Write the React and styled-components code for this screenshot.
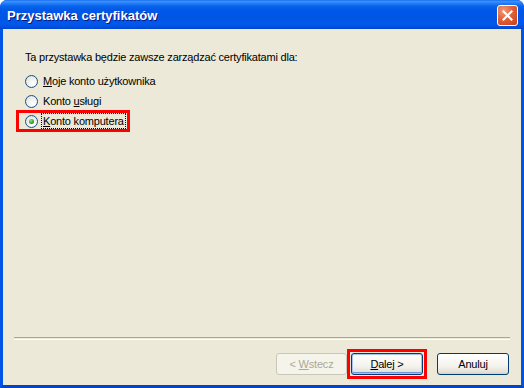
import React from "react";
import styled, { createGlobalStyle, css } from "styled-components";

const Global = createGlobalStyle`
  html, body { margin: 0; padding: 0; background: #ffffff; }
  body { font-family: "Liberation Sans", Arial, sans-serif; font-size: 11px; }
`;

const Window = styled.div`
  width: 524px;
  height: 388px;
  display: flex;
  flex-direction: column;
  box-sizing: border-box;
  overflow: hidden;
  border-radius: 7px 7px 0 0;
  background: #0054e3;
`;

const TitleBar = styled.div`
  height: 29px;
  flex: none;
  display: flex;
  align-items: center;
  justify-content: space-between;
  padding: 0 6px 0 7px;
  box-sizing: border-box;
  background: linear-gradient(
    to bottom,
    #0a5fe8 0px,
    #3d95ff 1px,
    #2a80f8 3px,
    #0765ea 6px,
    #0058e8 10px,
    #0055e5 18px,
    #0058ec 24px,
    #0250de 27px,
    #0044cc 29px
  );
`;

const Title = styled.span`
  color: #ffffff;
  font-family: "Liberation Sans", Arial, sans-serif;
  font-weight: bold;
  font-size: 13px;
  text-shadow: 1px 1px 0 #0a1883;
  margin-top: 1px;
`;

const CloseButton = styled.div`
  width: 21px;
  height: 21px;
  box-sizing: border-box;
  border: 1px solid #ffffff;
  border-radius: 3px;
  background: radial-gradient(circle at 30% 25%, #f09a7d 0%, #e0613a 45%, #c8401b 100%);
  display: flex;
  align-items: center;
  justify-content: center;
  margin-top: 2px;
`;

const Frame = styled.div`
  flex: 1;
  display: flex;
  flex-direction: column;
  border-left: 3px solid #0055e5;
  border-right: 3px solid #0055e5;
  border-bottom: 3px solid #0044cc;
`;

const Body = styled.div`
  flex: 1;
  display: flex;
  flex-direction: column;
  background: #ece9d8;
  color: #000000;
  letter-spacing: -0.2px;
`;

const Content = styled.div`
  flex: 1;
  padding: 22px 22px 0 22px;
  display: flex;
  flex-direction: column;
  align-items: flex-start;
`;

const Intro = styled.div`
  height: 13px;
  line-height: 13px;
  margin-bottom: 7px;
`;

const Row = styled.label`
  position: relative;
  display: inline-flex;
  align-items: center;
  height: 20px;
  gap: 3px;
  ${(p) =>
    p.$highlighted &&
    css`
      &::after {
        content: "";
        position: absolute;
        left: -9px;
        right: -4px;
        top: -1px;
        bottom: -1px;
        border: 3px solid #ff0000;
      }
    `}
`;

const Radio = styled.span`
  width: 13px;
  height: 13px;
  box-sizing: border-box;
  border-radius: 50%;
  border: 1px solid #1c5180;
  background: radial-gradient(circle at 65% 70%, #ffffff 0%, #f3f3ef 40%, #dcdad0 100%);
  display: flex;
  align-items: center;
  justify-content: center;
  flex: none;
  &::before {
    content: "";
    width: 5px;
    height: 5px;
    border-radius: 50%;
    background: radial-gradient(circle at 40% 35%, #8fe28f 0%, #21a121 60%, #17801a 100%);
    display: ${(p) => (p.$checked ? "block" : "none")};
  }
`;

const LabelText = styled.span`
  line-height: 14px;
  padding: 0 1px;
  border: 1px dotted ${(p) => (p.$focused ? "#000000" : "transparent")};
`;

const Separator = styled.div`
  margin: 0 11px;
  height: 1px;
  border-top: 1px solid #aca899;
  border-bottom: 1px solid #ffffff;
`;

const Footer = styled.div`
  display: flex;
  justify-content: flex-end;
  align-items: center;
  padding: 13px 12px 10px 12px;
`;

const Highlight = styled.div`
  border: 3px solid #ff0000;
  padding: 1px;
  margin: -4px -3px -4px 0;
  display: flex;
`;

const Button = styled.div`
  width: ${(p) => p.$w || 72}px;
  height: 22px;
  box-sizing: border-box;
  border-radius: 3px;
  display: flex;
  align-items: center;
  justify-content: center;
  font-size: 11px;
  margin-left: ${(p) => p.$gap || 0}px;
  border: 1px solid #003c74;
  background: linear-gradient(to bottom, #ffffff 0%, #f4f3ee 60%, #e3e1d6 90%, #d6d0c5 100%);
  color: #000000;
  white-space: pre;
  ${(p) =>
    p.$disabled &&
    css`
      border-color: #c9c7ba;
      background: #f5f4ea;
      color: #aca899;
    `}
  ${(p) =>
    p.$default &&
    css`
      box-shadow: inset 0 0 0 1px #a8c2f0, inset 0 -1px 0 1px #6f92df;
    `}
`;

const ButtonLabel = styled.span`
  white-space: pre;
`;

const U = styled.span`
  text-decoration: underline;
`;

export default function App() {
  return (
    <>
      <Global />
      <Window>
        <TitleBar>
          <Title>Przystawka certyfikatów</Title>
          <CloseButton>
            <svg width="11" height="11" viewBox="0 0 11 11">
              <path d="M1.5 1.5 L9.5 9.5 M9.5 1.5 L1.5 9.5" stroke="#ffffff" strokeWidth="2.2" strokeLinecap="square" />
            </svg>
          </CloseButton>
        </TitleBar>
        <Frame>
          <Body>
            <Content>
              <Intro>Ta przystawka będzie zawsze zarządzać certyfikatami dla:</Intro>
              <Row>
                <Radio />
                <LabelText>
                  <U>M</U>oje konto użytkownika
                </LabelText>
              </Row>
              <Row>
                <Radio />
                <LabelText>
                  Konto <U>u</U>sługi
                </LabelText>
              </Row>
              <Row $highlighted>
                <Radio $checked />
                <LabelText $focused>
                  <U>K</U>onto komputera
                </LabelText>
              </Row>
            </Content>
            <Separator />
            <Footer>
              <Button $disabled $w={71}>
                <ButtonLabel>
                  {"< "}
                  <U>W</U>stecz
                </ButtonLabel>
              </Button>
              <Highlight>
                <Button $default>
                  <ButtonLabel>
                    <U>D</U>alej{" >"}
                  </ButtonLabel>
                </Button>
              </Highlight>
              <Button $gap={13}>
                <ButtonLabel>Anuluj</ButtonLabel>
              </Button>
            </Footer>
          </Body>
        </Frame>
      </Window>
    </>
  );
}
